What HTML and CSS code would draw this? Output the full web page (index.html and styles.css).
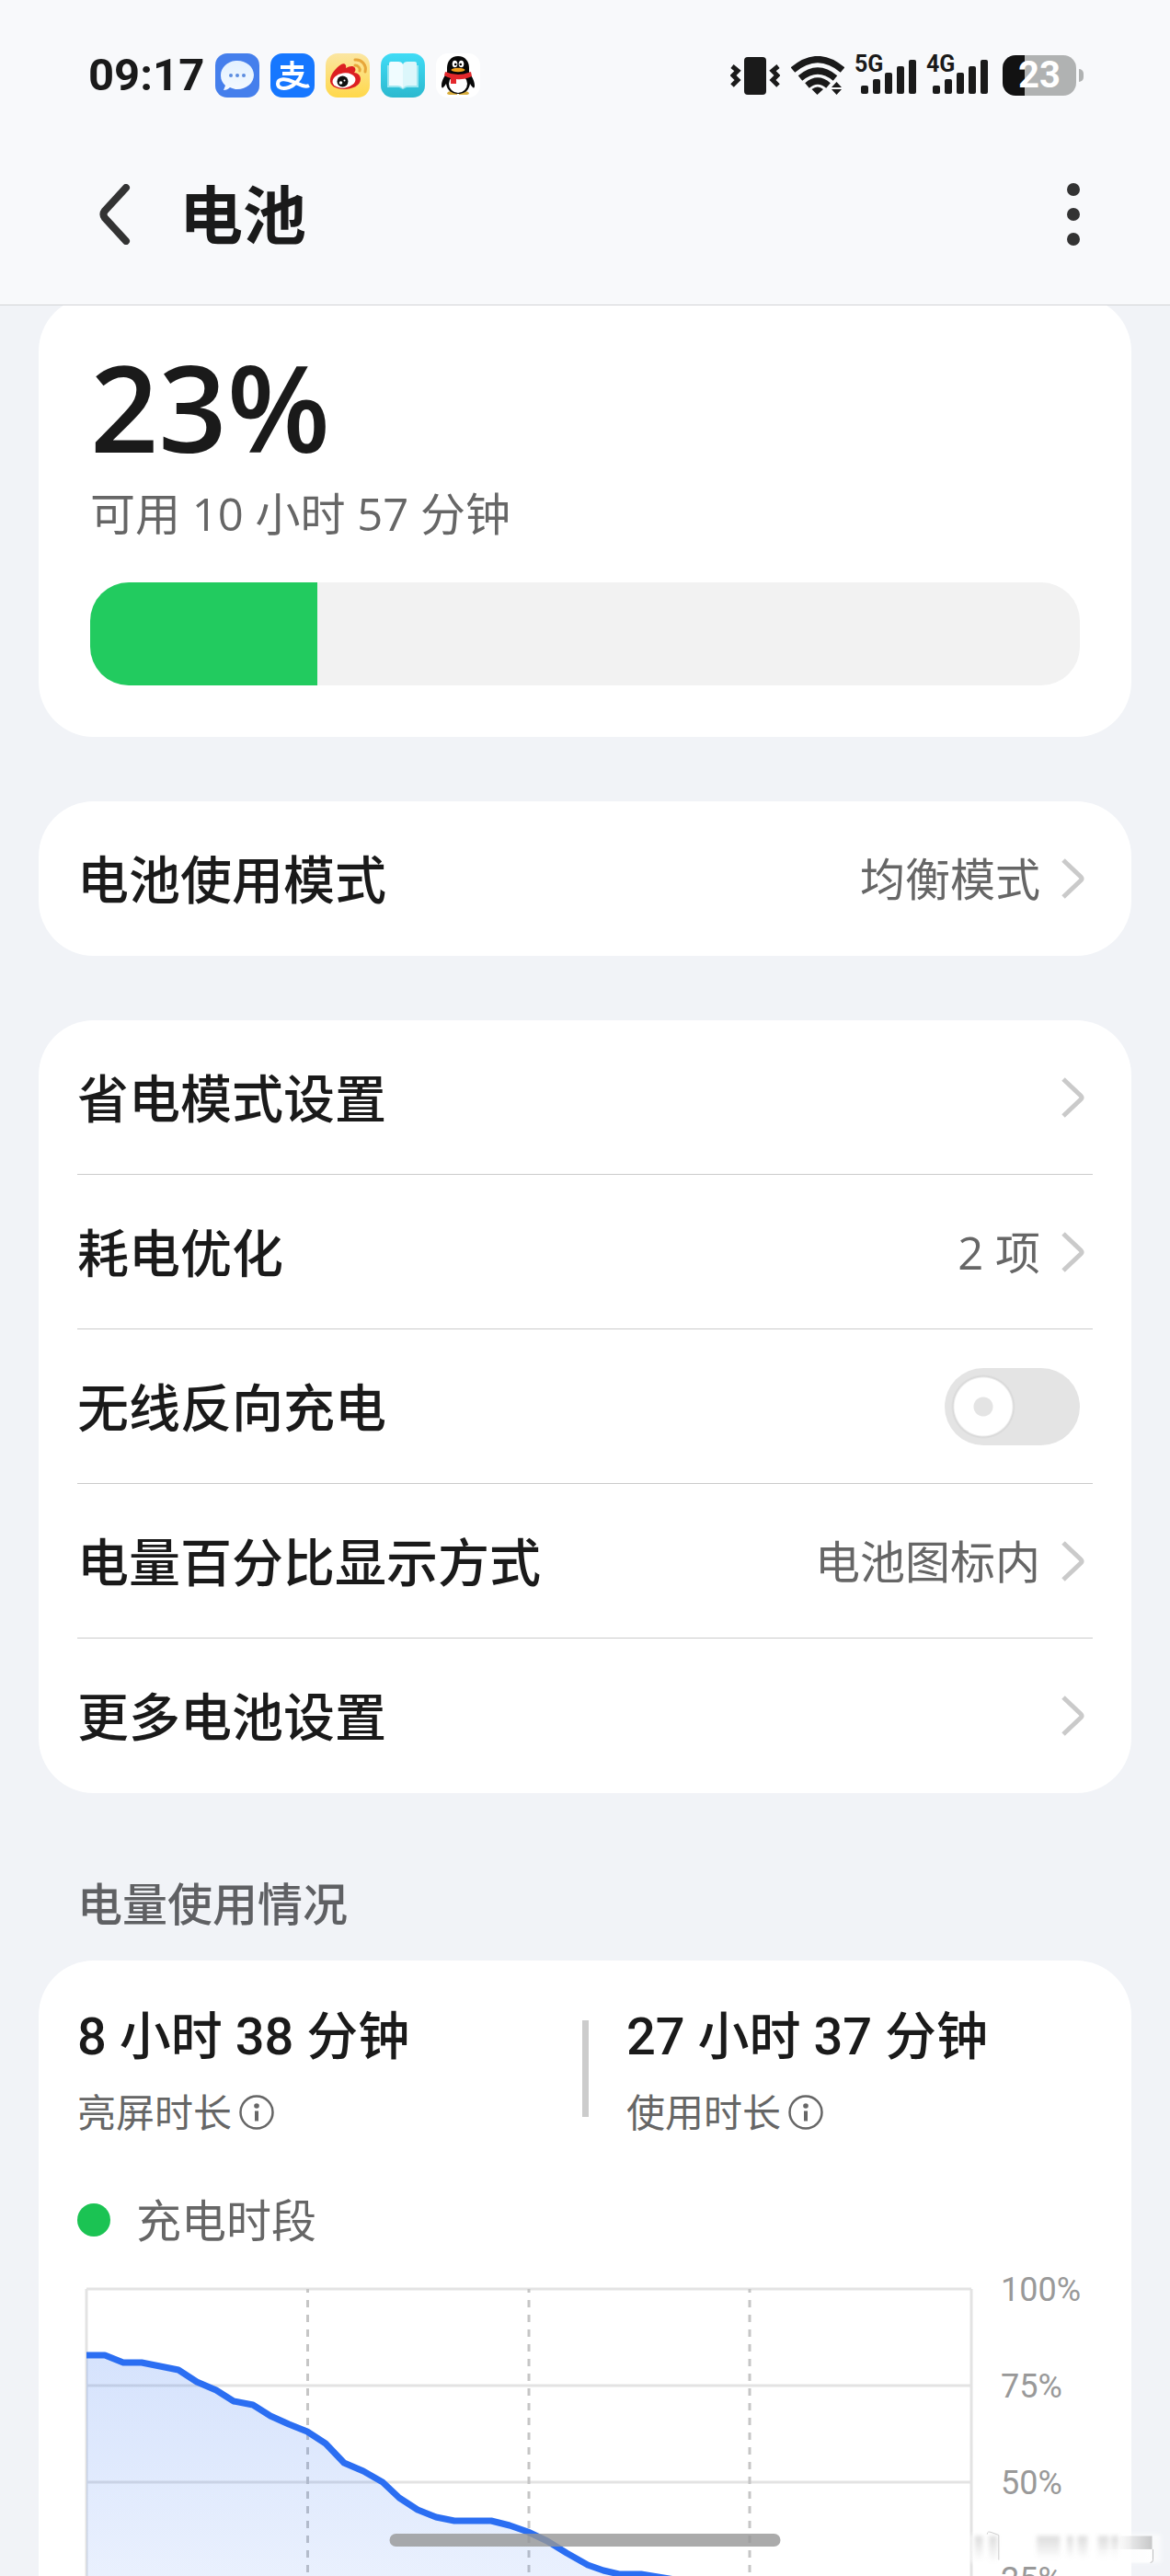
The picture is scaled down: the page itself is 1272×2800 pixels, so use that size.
FILE: index.html
```html
<!DOCTYPE html>
<html lang="zh-CN">
<head>
<meta charset="utf-8">
<meta name="viewport" content="width=device-width, initial-scale=1">
<title>电池</title>
<link rel="stylesheet" href="styles.css">
</head>
<body>
<svg class="defs" aria-hidden="true">
  <symbol id="chevron" viewBox="0 0 26 46"><path d="M3 3 22 21Q24 23 22 25L3 43" fill="none" stroke="#cacaca" stroke-width="5"/></symbol>
  <symbol id="info" viewBox="0 0 38 38"><circle cx="19" cy="19" r="17.500" fill="none" stroke="#666" stroke-width="2.500"/><circle cx="19" cy="12" r="2.800" fill="#666"/><path d="M19 17.500v11" stroke="#666" stroke-width="4"/></symbol>
</svg>
<div class="screen">
  <div class="status">
    <div class="status-left">
      <time class="clock">09:17</time>
      <svg class="app" viewBox="0 0 48 48" role="img" aria-label="信息">
        <defs><linearGradient id="sms" x1="0" y1="0" x2="0" y2="1"><stop offset="0" stop-color="#e2f1ff"/><stop offset="1" stop-color="#f4faff"/></linearGradient></defs>
        <rect width="48" height="48" rx="13" fill="#457fec"/>
        <path d="M24 8C14 8 6 15 6 24c0 5 2 8 5 11l-2 5c3 0 5-1 7-3 2 1 5 2 8 2 10 0 18-7 18-15.500S34 8 24 8z" fill="url(#sms)"/>
        <g fill="#5b8de0"><circle cx="17" cy="24" r="2"/><circle cx="24" cy="24" r="2"/><circle cx="31" cy="24" r="2"/></g>
      </svg>
      <svg class="app" viewBox="0 0 48 48" role="img" aria-label="支付">
        <rect width="48" height="48" rx="13" fill="#1677ff"/>
        <g fill="none" stroke="#fff" stroke-width="4"><path d="M11 15h25M23.500 8v14M13 22h21c-2 7-8 13-14 15-6 2-12 1-12-4 0-6 9-6 17-2l10 4c3 1 5 1 7 0"/></g>
      </svg>
      <svg class="app" viewBox="0 0 48 48" role="img" aria-label="微博">
        <defs><linearGradient id="wb" x1="0" y1="0" x2="0" y2="1"><stop offset="0" stop-color="#fbe6a2"/><stop offset="1" stop-color="#ffd84a"/></linearGradient></defs>
        <rect width="48" height="48" rx="13" fill="url(#wb)"/>
        <path d="M5 28c1-6 6-12 12-16 3-2 6 0 5 4 4-2 8-3 10 0 1 2 0 4-1 5 4 0 7 3 7 7 0 7-9 11-18 11S4 35 5 28z" fill="#dc1f22"/>
        <ellipse cx="20" cy="29.500" rx="12.500" ry="8" fill="#fff" transform="rotate(-8 20 29.500)"/>
        <circle cx="18.500" cy="30.500" r="6" fill="#111"/><circle cx="16.500" cy="32" r="1.800" fill="#fff"/><circle cx="20.500" cy="29.500" r="1" fill="#fff"/>
        <path d="M32 7c7-1 13 6 11 13M32 13c3 0 6 3 5 6" fill="none" stroke="#e7a63a" stroke-width="3" stroke-linecap="round"/>
      </svg>
      <svg class="app" viewBox="0 0 48 48" role="img" aria-label="阅读">
        <defs><linearGradient id="rd" x1="0" y1="0" x2="0" y2="1"><stop offset="0" stop-color="#40dcf6"/><stop offset="1" stop-color="#2cb9cf"/></linearGradient></defs>
        <rect width="48" height="48" rx="13" fill="url(#rd)"/>
        <path d="M7 13h34v24H28l-4 2-4-2H7z" fill="#9ce6f0"/>
        <path d="M9 11q0-2 2-2h8q4 0 5 3v26q-2-3-6-3H9z" fill="#f0fcff"/><path d="M39 11q0-2-2-2h-8q-4 0-5 3v26q2-3 6-3h9z" fill="#dcf7fb"/>
      </svg>
      <svg class="app" viewBox="0 0 48 48" role="img" aria-label="QQ">
        <rect width="48" height="48" rx="13" fill="#fff"/>
        <path d="M12 44q0-3 6-3h5v4H14zM36 44q0-3-6-3h-5v4h9z" fill="#d9ae3d"/>
        <path d="M24 3c-8 0-12 6-12 13v4c-2 4-6 9-6 15 0 4 2 3 5-2 1 7 6 11 13 11s12-4 13-11c3 5 5 6 5 2 0-6-4-11-6-15v-4C36 9 32 3 24 3z" fill="#080808"/>
        <ellipse cx="24" cy="33" rx="10" ry="10" fill="#fff"/>
        <path d="M10 20q14 6 28 0l1 5q-8 4-17 3v5h-6v-6q-4-1-7-3z" fill="#e4282c"/>
        <ellipse cx="20.500" cy="11.500" rx="2.800" ry="3.800" fill="#fff"/><ellipse cx="27.500" cy="11.500" rx="2.800" ry="3.800" fill="#fff"/><circle cx="21.200" cy="12" r="1.300"/><circle cx="26.800" cy="12" r="1.300"/>
        <ellipse cx="24" cy="18" rx="7.500" ry="2.200" fill="#f0a11e"/>
      </svg>
    </div>
    <div class="status-right">
      <svg class="vibrate" viewBox="0 0 54 42" role="img" aria-label="振动"><rect x="15" y="1" width="24" height="41" rx="4" fill="#1a1a1a"/><path d="M2 11l6 5-5 5 5 5-6 6M52 11l-6 5 5 5-5 5 6 6" fill="none" stroke="#1a1a1a" stroke-width="5"/></svg>
      <svg class="wifi" viewBox="0 0 58 42" role="img" aria-label="无线网络"><g fill="none" stroke="#1a1a1a" stroke-width="7"><path d="M2 15Q29-8 56 15"/><path d="M10 24Q29 8 48 24"/><path d="M17.500 32Q29 22 40.500 32"/></g><path d="M22.500 36Q29 31 35 36l-6.500 6z" fill="#1a1a1a"/><path d="M44 34h11l-5.500-6zM44 36h11l-5.500 6z" fill="#1a1a1a"/></svg>
      <svg class="signal" viewBox="0 0 66 44" role="img" aria-label="5G 信号"><text x="-1" y="18">5G</text><g fill="#1a1a1a"><rect x="6" y="33" width="8" height="9" rx="2"/><rect x="19" y="26" width="8" height="16" rx="2"/><rect x="32" y="19" width="8" height="23" rx="2"/><rect x="45" y="12" width="8" height="30" rx="2"/><rect x="58" y="5" width="8" height="37" rx="2"/></g></svg>
      <svg class="signal" viewBox="0 0 66 44" role="img" aria-label="4G 信号"><text x="-1" y="18">4G</text><g fill="#1a1a1a"><rect x="6" y="33" width="8" height="9" rx="2"/><rect x="19" y="26" width="8" height="16" rx="2"/><rect x="32" y="19" width="8" height="23" rx="2"/><rect x="45" y="12" width="8" height="30" rx="2"/><rect x="58" y="5" width="8" height="37" rx="2"/></g></svg>
      <div class="battery"><span class="battery-body">23</span><span class="battery-nub"></span></div>
    </div>
  </div>
  <header class="appbar">
    <button class="icon-button back" type="button" aria-label="返回"><svg width="36" height="66" viewBox="0 0 36 66"><path d="M30 4 7 29Q4 33 7 37L30 62" fill="none" stroke="#333" stroke-width="8" stroke-linecap="round"/></svg></button>
    <h1 class="title">电池</h1>
    <button class="icon-button more" type="button" aria-label="更多"><svg width="14" height="68" viewBox="0 0 14 68"><g fill="#333"><circle cx="7" cy="7" r="7"/><circle cx="7" cy="34" r="7"/><circle cx="7" cy="61" r="7"/></g></svg></button>
  </header>
  <main class="content">
    <section class="card summary">
      <p class="percent">23%</p>
      <p class="remaining">可用 10 小时 57 分钟</p>
      <div class="level" role="progressbar" aria-label="电量" aria-valuenow="23" aria-valuemin="0" aria-valuemax="100"><div class="level-fill" style="width: 23%"></div></div>
    </section>
    <nav class="card list">
      <a class="row" href="#mode"><span class="label">电池使用模式</span><span class="value">均衡模式</span><svg class="chevron"><use href="#chevron"/></svg></a>
    </nav>
    <div class="card list">
      <a class="row" href="#saving"><span class="label">省电模式设置</span><svg class="chevron"><use href="#chevron"/></svg></a>
      <a class="row" href="#optimise"><span class="label">耗电优化</span><span class="value">2 项</span><svg class="chevron"><use href="#chevron"/></svg></a>
      <label class="row switch-row"><span class="label">无线反向充电</span><input class="switch" type="checkbox" role="switch"></label>
      <a class="row" href="#percentage"><span class="label">电量百分比显示方式</span><span class="value">电池图标内</span><svg class="chevron"><use href="#chevron"/></svg></a>
      <a class="row" href="#settings"><span class="label">更多电池设置</span><svg class="chevron"><use href="#chevron"/></svg></a>
    </div>
    <h2 class="section-title">电量使用情况</h2>
    <section class="card usage">
      <div class="stats">
        <div class="stat"><p class="stat-value">8 小时 38 分钟</p><p class="stat-label">亮屏时长<svg class="info"><use href="#info"/></svg></p></div>
        <div class="stat"><p class="stat-value">27 小时 37 分钟</p><p class="stat-label">使用时长<svg class="info"><use href="#info"/></svg></p></div>
      </div>
      <p class="legend"><span class="legend-dot"></span>充电时段</p>
      <div class="chart">
        <svg class="plot" viewBox="0 0 962 420" preserveAspectRatio="none" role="img" aria-label="电量曲线">
          <defs><linearGradient id="area" gradientUnits="userSpaceOnUse" x1="0" y1="60" x2="0" y2="420"><stop offset="0" stop-color="#2b6ef2" stop-opacity=".2"/><stop offset="1" stop-color="#2b6ef2" stop-opacity=".06"/></linearGradient></defs>
          <path d="M0 0H962M0 105H962M0 210H962M0 315H962M0 420H962M0 0V420M962 0V420" fill="none" stroke="#e3e3e3" stroke-width="3"/>
          <path d="M240.500 0V420M481 0V420M721 0V420" fill="none" stroke="#c6c6c6" stroke-width="3" stroke-dasharray="8 8" stroke-dashoffset="4"/>
          <path d="M0 72H20L40 80H60L100 88 120 101 141 110 160 122 181 126 200 138 220 147 240 155 260 168 280 189 301 198 322 210 340 227 360 240 380 248 400 252H440L460 257 480 264 501 274 522 287 545 300 562 306 579 310H603L640 316 700 330 760 345 840 360 962 380V420H0z" fill="url(#area)"/>
          <path d="M0 72H20L40 80H60L100 88 120 101 141 110 160 122 181 126 200 138 220 147 240 155 260 168 280 189 301 198 322 210 340 227 360 240 380 248 400 252H440L460 257 480 264 501 274 522 287 545 300 562 306 579 310H603L640 316 700 330 760 345 840 360 962 380" fill="none" stroke="#2b6ef2" stroke-width="7" stroke-linejoin="round"/>
        </svg>
        <div class="axis"><span>100%</span><span>75%</span><span>50%</span><span>25%</span><span>0%</span></div>
      </div>
    </section>
  </main>
  <div class="home-indicator"></div>
  <svg class="watermark" viewBox="0 0 220 44" aria-hidden="true">
    <defs>
      <linearGradient id="fade" x1="0" y1="0" x2="0" y2="1"><stop offset="0" stop-color="#888" stop-opacity=".3"/><stop offset="1" stop-color="#888" stop-opacity="0"/></linearGradient>
      <linearGradient id="edge" x1="0" y1="0" x2="1" y2="0"><stop offset="0" stop-color="#fff" stop-opacity="0"/><stop offset="1" stop-color="#fff"/></linearGradient>
      <linearGradient id="tail" x1="0" y1="0" x2="1" y2="0"><stop offset="0" stop-color="#999" stop-opacity=".05"/><stop offset="1" stop-color="#888" stop-opacity=".45"/></linearGradient>
      <filter id="soft"><feGaussianBlur stdDeviation="2"/></filter>
    </defs>
    <rect x="0" y="6" width="216" height="32" fill="#fff" opacity=".6" filter="url(#soft)"/>
    <g fill="url(#fade)" filter="url(#soft)"><rect x="6" y="8" width="9" height="28"/><rect x="22" y="8" width="9" height="30"/><rect x="76" y="8" width="26" height="26"/><rect x="110" y="8" width="7" height="26"/><rect x="122" y="8" width="11" height="26"/><rect x="145" y="8" width="12" height="26"/><rect x="160" y="8" width="8" height="26"/></g>
    <path d="M20 6q0-4 5-2l8 3v28" fill="none" stroke="#ccc" stroke-width="1"/>
    <rect x="170" y="8" width="36" height="15" fill="url(#tail)"/><rect x="130" y="23" width="76" height="15" fill="url(#edge)"/>
    <path d="M207 23v12q0 3-3 3" fill="none" stroke="#bbb" stroke-width="1"/>
  </svg>
</div>
</body>
</html>
```
FILE: styles.css
```css
* { box-sizing: border-box; }
body {
  margin: 0;
  background: #f1f3f7;
  color: #1a1a1a;
  font-family: "Open Sans", "Noto Sans CJK SC", sans-serif;
}
h1, h2, p { margin: 0; }
a { color: inherit; text-decoration: none; }
.defs { position: absolute; width: 0; height: 0; }

.screen {
  position: relative;
  display: flex;
  flex-direction: column;
  height: 100vh;
  overflow: hidden;
}

/* Status bar */
.status {
  flex: none;
  display: flex;
  align-items: center;
  justify-content: space-between;
  height: 164px;
  padding: 0 94px 0 96px;
  background: #f8f9fb;
}
.status-left { display: flex; align-items: center; gap: 12px; }
.clock { font: 700 49px/60px Roboto, sans-serif; }
.app { width: 48px; height: 48px; }
.status-right { display: flex; align-items: center; gap: 12px; }
.vibrate { width: 54px; height: 42px; }
.wifi { width: 58px; height: 42px; }
.signal {
  width: 66px;
  height: 44px;
  overflow: visible;
  font: 700 25px Roboto, sans-serif;
  fill: #1a1a1a;
}
.battery { display: flex; align-items: center; gap: 3px; margin-left: 4px; }
.battery-body {
  width: 80px;
  height: 44px;
  border-radius: 14px;
  background: linear-gradient(90deg, #121212 30%, #b0b2b2 30%);
  color: #fff;
  font: 700 40px/44px Roboto, sans-serif;
  text-align: center;
}
.battery-nub { width: 5px; height: 14px; border-radius: 0 5px 5px 0; background: #b0b2b2; }

/* App bar */
.appbar {
  flex: none;
  display: flex;
  align-items: center;
  height: 168px;
  padding: 0 98px 30px 107px;
  border-bottom: 1px solid #d2d3d6;
  background: #f8f9fb;
}
.icon-button { display: flex; padding: 0; border: 0; background: none; }
.title {
  flex: 1;
  margin-left: 52px;
  font-size: 69px;
  line-height: 96px;
  font-weight: 700;
}

/* Cards */
.content { flex: 1; min-height: 0; overflow: hidden; padding: 0 42px; }
.card { margin-bottom: 70px; border-radius: 60px; background: #fff; }
.summary { margin-top: -10px; padding: 60px 56px 56px; }
.percent { font-size: 130px; line-height: 120px; font-weight: 600; }
.remaining {
  margin: 24px 0 43px;
  color: #666;
  font-size: 49px;
  line-height: 64px;
}
.level { height: 112px; overflow: hidden; border-radius: 42px; background: #f2f2f2; }
.level-fill { height: 100%; background: #22cb5f; }

.list { padding: 0 42px; }
.row {
  display: flex;
  align-items: center;
  height: 168px;
  padding-right: 9px;
  border-bottom: 1px solid #cbcbcb;
}
.row:last-child { border-bottom: 0; }
.switch-row { padding-right: 14px; }
.label { flex: 1; font-size: 56px; line-height: 72px; font-weight: 500; }
.value { color: #666; font-size: 49px; line-height: 64px; }
.chevron { flex: none; width: 26px; height: 46px; margin-left: 22px; }
.switch {
  appearance: none;
  width: 147px;
  height: 84px;
  margin: 0;
  border-radius: 42px;
  background: radial-gradient(circle at 42px 42px, #e4e4e4 10px, #fff 11px 31px, #d8d8d8 33px, #e4e4e4 35px);
}

/* Usage */
.section-title {
  margin: -50px 0 30px;
  padding: 68px 42px 0;
  color: #5f6063;
  font-size: 49px;
  line-height: 64px;
  font-weight: 500;
}
.usage { padding: 45px 42px 60px; }
.stats {
  display: grid;
  grid-template-columns: 1fr 1fr;
  background: linear-gradient(#ccc, #ccc) 50% 20px / 7px 105px no-repeat;
}
.stat + .stat { padding-left: 45px; }
.stat-value { font: 500 56px/76px Roboto, "Noto Sans CJK SC", sans-serif; }
.stat-label {
  display: flex;
  align-items: center;
  gap: 8px;
  margin-top: 20px;
  color: #666;
  font-size: 42px;
  line-height: 48px;
}
.info { width: 38px; height: 38px; }
.legend {
  display: flex;
  align-items: center;
  gap: 28px;
  margin: 61px 0 43px;
  color: #666;
  font-size: 49px;
  line-height: 64px;
}
.legend-dot { width: 36px; height: 36px; border-radius: 50%; background: #1bc353; }
.chart { display: flex; gap: 32px; margin-left: 10px; }
.plot { flex: 1; min-width: 0; height: 420px; overflow: visible; }
.axis {
  display: flex;
  flex-direction: column;
  width: 100px;
  margin-top: -20px;
  color: #999;
  font: 400 36px/42px Roboto, sans-serif;
}
.axis span { height: 105px; }

/* Overlays */
.home-indicator {
  position: absolute;
  bottom: 32px;
  left: 50%;
  width: 425px;
  height: 14px;
  border-radius: 7px;
  background: rgba(150, 150, 150, .8);
  transform: translateX(-50%);
}
.watermark { position: absolute; right: 6px; bottom: 8px; width: 212px; height: 44px; }
```
